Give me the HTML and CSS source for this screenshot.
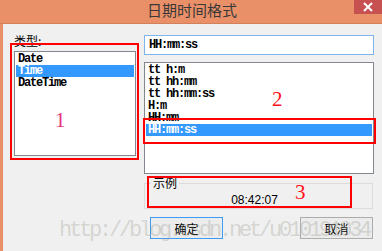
FILE: index.html
```html
<!DOCTYPE html>
<html lang="zh-CN">
<head>
    <meta charset="UTF-8">
    <title>日期时间格式</title>
    <link rel="stylesheet" href="styles.css">
</head>
<body>
    <div class="window">
        <div class="titlebar">
            <span class="title">日期时间格式</span>
            <span class="close">
                <svg width="10" height="10" viewBox="0 0 10 10">
                    <path d="M1 1 L9 9 M9 1 L1 9" stroke="#fff" stroke-width="2" />
                </svg>
            </span>
        </div>

        <div class="content">
            <div class="col-left">
                <div class="label">类型:</div>
                <ul class="list list-type">
                    <li>Date</li>
                    <li class="selected">Time</li>
                    <li>DateTime</li>
                </ul>
            </div>

            <div class="col-right">
                <input class="format" type="text" value="HH:mm:ss">
                <ul class="list list-format">
                    <li>tt h:m</li>
                    <li>tt hh:mm</li>
                    <li>tt hh:mm:ss</li>
                    <li>H:m</li>
                    <li>HH:mm</li>
                    <li class="selected">HH:mm:ss</li>
                </ul>
                <fieldset class="sample">
                    <legend>示例</legend>
                    <div class="sample-value">08:42:07</div>
                </fieldset>
                <div class="actions">
                    <button class="btn btn-ok">确定</button>
                    <button class="btn">取消</button>
                </div>
            </div>
        </div>

        <!-- annotations drawn on the screenshot -->
        <div class="mark mark-1"></div>
        <div class="mark mark-2"></div>
        <div class="mark mark-3"></div>
        <span class="num num-1">1</span>
        <span class="num num-2">2</span>
        <span class="num num-3">3</span>

        <div class="watermark">http://blog.csdn.net/u010191034</div>
    </div>
</body>
</html>
```

FILE: styles.css
```css
body {
    margin: 0;
    background-color: #f0f0f0;
    font-family: "Noto Sans CJK SC", "Liberation Sans", sans-serif;
}

.window {
    position: relative;
    width: 382px;
    height: 251px;
    overflow: hidden;
    background-color: #f0f0f0;
}

.titlebar {
    display: flex;
    justify-content: space-between;
    align-items: flex-start;
    height: 23px;
    background-color: #ea9068;
    border-bottom: 1px solid #d3815c;
}

.title {
    flex: 1;
    text-align: center;
    padding-left: 30px;
    font-size: 15px;
    line-height: 20px;
    color: #383838;
}

.close {
    display: flex;
    justify-content: center;
    align-items: center;
    width: 28px;
    height: 14px;
    background-color: #c75050;
}

.content {
    display: flex;
    gap: 8px;
    height: 227px;
    padding: 9px 0 0 11px;
    border-left: 3px solid #ea9068;
    box-sizing: border-box;
}

.col-left {
    display: flex;
    flex-direction: column;
    width: 122px;
}

.label {
    font-size: 12px;
    line-height: 16px;
    color: #000;
}

.list {
    list-style: none;
    margin: 0;
    padding: 1px;
    background-color: #fff;
    border: 1px solid #828790;
    font-family: "Liberation Mono", monospace;
    font-size: 12px;
    font-weight: bold;
    letter-spacing: -1.2px;
    line-height: 12px;
    color: #000;
}

.list li {
    height: 12px;
    padding-left: 2px;
    white-space: nowrap;
}

.list li.selected {
    background-color: #3399ff;
    color: #fff;
}

.list-type {
    margin-top: 2px;
    height: 105px;
    box-sizing: border-box;
}

.col-right {
    display: flex;
    flex-direction: column;
    width: 230px;
    padding-top: 2px;
}

.format {
    height: 20px;
    margin: 0;
    padding: 0 4px;
    border: 1px solid #7eb4ea;
    box-sizing: border-box;
    font-family: "Liberation Mono", monospace;
    font-size: 12px;
    font-weight: bold;
    letter-spacing: -1.2px;
    color: #000;
    outline: none;
}

.list-format {
    margin-top: 7px;
    height: 112px;
    box-sizing: border-box;
}

.sample {
    margin: 2px 1px 0 0;
    padding: 3px 6px 1px;
    border: 1px solid #dcdcdc;
    font-size: 12px;
}

.sample legend {
    padding: 0 2px;
    line-height: 14px;
    color: #000;
}

.sample-value {
    padding-right: 8px;
    text-align: center;
    font-family: "Liberation Sans", sans-serif;
    font-size: 12px;
    line-height: 14px;
    color: #000;
}

.actions {
    display: flex;
    justify-content: space-between;
    margin-top: 8px;
    padding: 0 1px 0 6px;
}

.btn {
    width: 73px;
    height: 22px;
    padding: 0;
    background-color: #ececec;
    border: 1px solid #adadad;
    font-family: "Noto Sans CJK SC", sans-serif;
    font-size: 12px;
    color: #000;
}

.btn-ok {
    border-color: #3c9cf5;
}

.mark {
    position: absolute;
    border: 2px solid #ff0000;
    box-sizing: border-box;
}

.mark-1 {
    left: 10px;
    top: 43px;
    width: 129px;
    height: 117px;
}

.mark-2 {
    left: 143px;
    top: 118px;
    width: 233px;
    height: 26px;
}

.mark-3 {
    left: 147px;
    top: 176px;
    width: 205px;
    height: 32px;
}

.num {
    position: absolute;
    font-family: "Liberation Serif", serif;
    font-size: 21px;
    line-height: 21px;
    color: #ff1020;
}

.num-1 {
    left: 55px;
    top: 110px;
    color: #e8307a;
}

.num-2 {
    left: 272px;
    top: 89px;
}

.num-3 {
    left: 295px;
    top: 182px;
}

.watermark {
    position: absolute;
    left: 59px;
    top: 220px;
    font-family: "Liberation Mono", monospace;
    font-size: 22px;
    line-height: 22px;
    letter-spacing: -3.2px;
    color: rgba(160, 160, 150, 0.35);
    white-space: nowrap;
    pointer-events: none;
}
```
